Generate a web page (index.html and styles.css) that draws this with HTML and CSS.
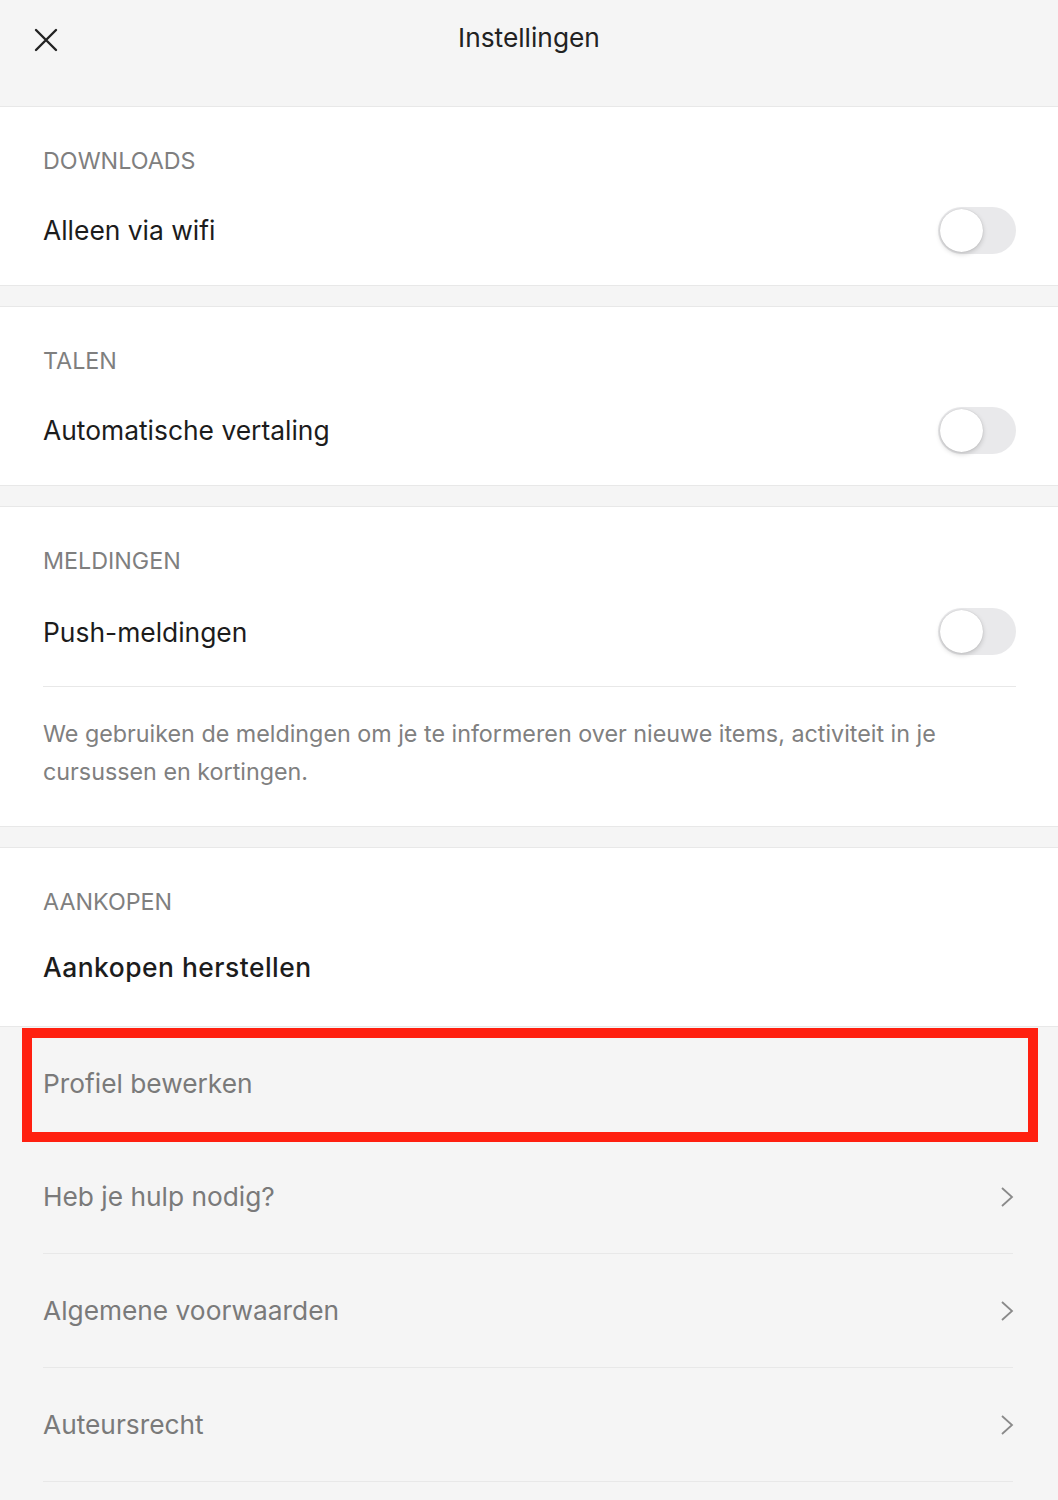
FILE: index.html
```html
<!DOCTYPE html>
<html lang="nl">
<head>
    <meta charset="UTF-8">
    <meta name="viewport" content="width=device-width, initial-scale=1.0">
    <title>Instellingen</title>
    <link rel="stylesheet" href="styles.css">
</head>
<body>

<div class="header">
    <button class="close-btn" aria-label="Sluiten">
        <svg width="24" height="24" viewBox="0 0 24 24">
            <path d="M2 2 L22 22 M22 2 L2 22" stroke="#222" stroke-width="2.4" stroke-linecap="round" fill="none"/>
        </svg>
    </button>
    <h1>Instellingen</h1>
</div>

<div class="section">
    <div class="section-label">DOWNLOADS</div>
    <div class="row">
        <span>Alleen via wifi</span>
        <span class="toggle"><span class="knob"></span></span>
    </div>
</div>

<div class="spacer"></div>

<div class="section">
    <div class="section-label">TALEN</div>
    <div class="row">
        <span>Automatische vertaling</span>
        <span class="toggle"><span class="knob"></span></span>
    </div>
</div>

<div class="spacer"></div>

<div class="section">
    <div class="section-label">MELDINGEN</div>
    <div class="row row-push">
        <span>Push-meldingen</span>
        <span class="toggle"><span class="knob"></span></span>
    </div>
    <div class="divider"></div>
    <p class="note">We gebruiken de meldingen om je te informeren over nieuwe items, activiteit in je cursussen en kortingen.</p>
</div>

<div class="spacer"></div>

<div class="section">
    <div class="section-label">AANKOPEN</div>
    <div class="row row-restore">
        <span>Aankopen herstellen</span>
    </div>
</div>

<div class="links">
    <div class="link highlighted">
        <span>Profiel bewerken</span>
    </div>
    <div class="link">
        <span>Heb je hulp nodig?</span>
        <svg class="chevron" width="14" height="22" viewBox="0 0 14 22">
            <path d="M2 2 L12 11 L2 20" stroke="#8a8a8a" stroke-width="1.8" fill="none"/>
        </svg>
    </div>
    <div class="link">
        <span>Algemene voorwaarden</span>
        <svg class="chevron" width="14" height="22" viewBox="0 0 14 22">
            <path d="M2 2 L12 11 L2 20" stroke="#8a8a8a" stroke-width="1.8" fill="none"/>
        </svg>
    </div>
    <div class="link">
        <span>Auteursrecht</span>
        <svg class="chevron" width="14" height="22" viewBox="0 0 14 22">
            <path d="M2 2 L12 11 L2 20" stroke="#8a8a8a" stroke-width="1.8" fill="none"/>
        </svg>
    </div>
</div>

</body>
</html>
```

FILE: styles.css
```css
body {
    margin: 0;
    font-family: Inter, "Noto Sans", sans-serif;
    background: #f5f5f5;
    color: #1c1c1c;
}
.header {
    position: relative;
    height: 106px;
    background: #f5f5f5;
    border-bottom: 1px solid #e8e8e8;
    display: flex;
    justify-content: center;
}
.header h1 {
    margin: 0;
    padding-top: 22px;
    font-size: 26.3px;
    font-weight: 400;
    line-height: 32px;
    color: #222;
}
.close-btn {
    position: absolute;
    left: 34px;
    top: 28px;
    padding: 0;
    border: none;
    background: none;
}
.section {
    background: #fff;
    padding: 0 42px 0 43px;
}
.spacer {
    height: 20px;
    background: #f5f5f5;
    border-top: 1px solid #e8e8e8;
    border-bottom: 1px solid #e8e8e8;
}
.section-label {
    padding-top: 40px;
    line-height: 28px;
    font-size: 23.3px;
    color: #7f7f7f;
}
.row {
    height: 110px;
    display: flex;
    align-items: center;
    justify-content: space-between;
    font-size: 26.4px;
    color: #1c1c1c;
}
.row-push {
    height: 111px;
    padding-top: 2px;
    box-sizing: border-box;
}
.row-restore {
    height: 102px;
    padding-bottom: 8px;
    font-weight: 500;
    letter-spacing: 0.5px;
}
.toggle {
    width: 78px;
    height: 47px;
    border-radius: 24px;
    background: #e9e9eb;
    display: flex;
    align-items: center;
    padding-left: 2px;
    box-sizing: border-box;
}
.knob {
    width: 43px;
    height: 43px;
    border-radius: 50%;
    background: #fff;
    box-shadow: 0 2px 5px rgba(0, 0, 0, 0.18), 0 0 1px rgba(0, 0, 0, 0.2);
}
.divider {
    height: 1px;
    background: #e8e8e8;
}
.note {
    margin: 0;
    padding: 28px 60px 35px 0;
    font-size: 23.3px;
    line-height: 38px;
    color: #808080;
}
.links {
    background: #f5f5f5;
    border-top: 1px solid #e8e8e8;
}
.link {
    position: relative;
    height: 113px;
    margin: 0 45px 0 43px;
    border-bottom: 1px solid #e8e8e8;
    display: flex;
    align-items: center;
    justify-content: space-between;
    font-size: 26.3px;
    color: #7a7a7a;
}
.link.highlighted {
    border-bottom: none;
    height: 113px;
}
.link.highlighted::after {
    content: "";
    position: absolute;
    left: -21px;
    right: -25px;
    top: 1px;
    bottom: -2px;
    border: 10px solid #ff2010;
}
.chevron {
    margin-right: -1px;
}
```
